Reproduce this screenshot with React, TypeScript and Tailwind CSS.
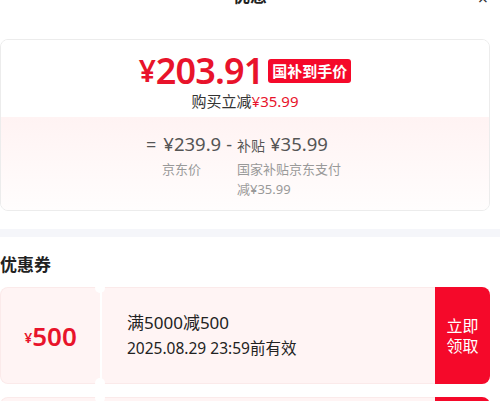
const font = { fontFamily: '"Noto Sans", "Noto Sans CJK SC", sans-serif' };

const Coupon = ({ amount, title, expire }: { amount: string; title: string; expire: string }) => (
  <div className="flex h-[97px] w-[490px]">
    <div className="relative flex w-[100px] items-center justify-center rounded-l-[8px] border border-r-0 border-[#fbeaea] bg-[#fff4f4]">
      <span className="mt-[4px] text-[14px] font-semibold text-[#e8132b]">¥</span>
      <span className="text-[26px] font-semibold leading-none text-[#e8132b]">{amount}</span>
      <span className="absolute -right-[5px] -top-[5px] z-10 h-[10px] w-[10px] rounded-full bg-white" />
      <span className="absolute -bottom-[5px] -right-[5px] z-10 h-[10px] w-[10px] rounded-full bg-white" />
    </div>
    <div className="ml-[2px] flex flex-1 flex-col justify-center border border-l-0 border-r-0 border-[#fbeaea] bg-[#fff4f4] pl-[25px]">
      <div className="text-[17px] leading-[26px] text-[#222]">{title}</div>
      <div className="text-[15.5px] leading-[25px] text-[#222]">{expire}</div>
    </div>
    <div className="flex w-[55px] flex-col items-center justify-center rounded-r-[8px] bg-[#f5092a] text-[16px] leading-[20px] text-white">
      <span>立即</span>
      <span>领取</span>
    </div>
  </div>
);

export default function App() {
  return (
    <div className="h-[401px] w-[500px] overflow-hidden bg-white" style={font}>
      <div className="relative flex h-[39px] items-start justify-center">
        <div className="-mt-[17px] text-[17px] font-bold leading-[25px] text-[#222]">优惠</div>
        <span className="absolute right-[12px] top-[-14px] text-[18px] leading-[25px] text-[#333]">×</span>
      </div>

      <div className="w-[490px] overflow-hidden rounded-[8px] border border-[#ececec]">
        <div className="flex h-[77px] flex-col items-center bg-white pt-[12px]">
          <div className="flex h-[38px] items-center">
            <span className="text-[30px] font-semibold leading-none text-[#e8132b]">¥</span>
            <span className="text-[36px] font-semibold leading-[38px] tracking-tight text-[#e8132b]">203.91</span>
            <span className="ml-[5px] rounded-[3px] bg-[#f5092a] px-[4px] text-[15px] font-bold leading-[24px] text-white">国补到手价</span>
          </div>
          <div className="text-[15px] leading-[22px] text-[#333]">
            购买立减<span className="text-[#e8132b]">¥35.99</span>
          </div>
        </div>
        <div className="flex h-[93px] flex-col bg-gradient-to-b from-[#fff3f3] to-[#fffdfd] pl-[145px] pt-[13px]">
          <div className="flex items-baseline text-[#555]">
            <span className="text-[18px]">=</span>
            <span className="ml-[7px] text-[18.5px]">¥239.9</span>
            <span className="mx-[5px] text-[18px]">-</span>
            <span className="text-[14px]">补贴</span>
            <span className="ml-[5px] text-[18.5px]">¥35.99</span>
          </div>
          <div className="mt-[1px] flex text-[13px] leading-[20px] text-[#999]">
            <span className="ml-[16px] w-[75px]">京东价</span>
            <span className="w-[112px]">国家补贴京东支付减¥35.99</span>
          </div>
        </div>
      </div>

      <div className="mt-[18px] h-[8px] bg-[#f5f6fa]" />

      <div className="pt-[16px] pb-[10px] text-[17px] font-bold leading-[24px] text-[#222]">优惠券</div>

      <div className="flex flex-col gap-[13px]">
        <Coupon amount="500" title="满5000减500" expire="2025.08.29 23:59前有效" />
        <Coupon amount="300" title="满3000减300" expire="2025.08.29 23:59前有效" />
      </div>
    </div>
  );
}
